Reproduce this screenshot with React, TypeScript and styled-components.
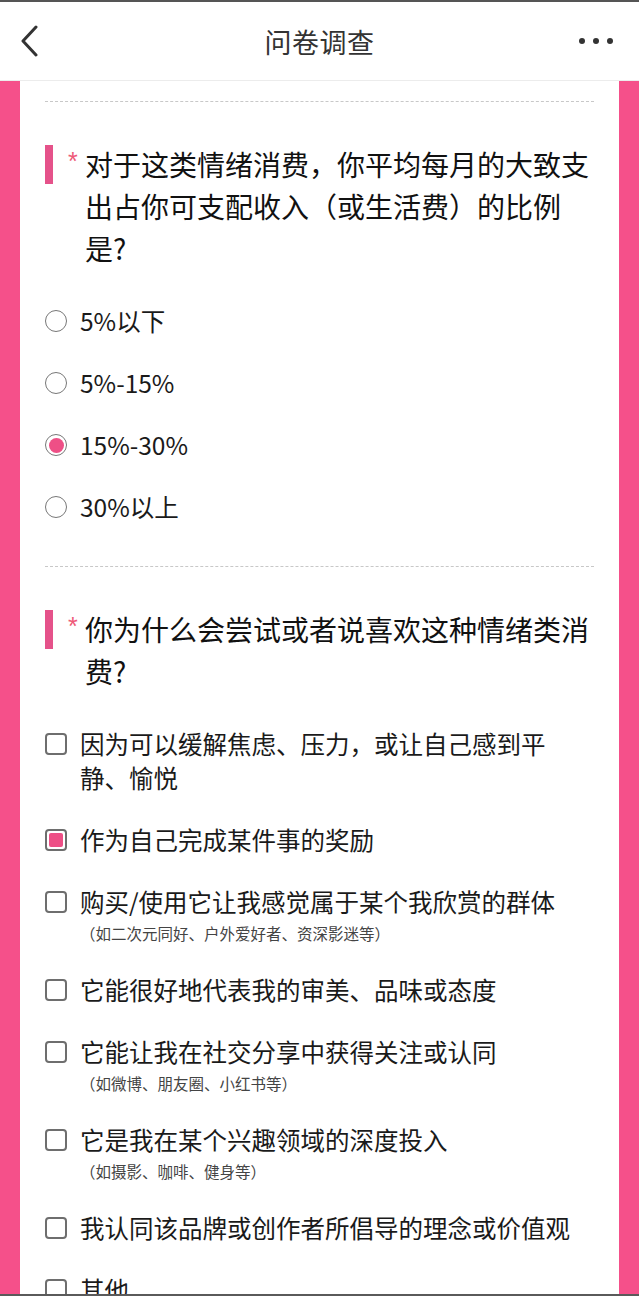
import React from "react"
import styled, { createGlobalStyle } from "styled-components"

const GlobalStyle = createGlobalStyle`
  html, body {
    margin: 0;
    padding: 0;
    background: #ffffff;
    overflow: hidden;
  }
  * {
    box-sizing: border-box;
  }
`

const FONT = `"Noto Sans CJK SC", "Noto Sans", sans-serif`
const PINK = "#f5508a"

const Screen = styled.div`
  width: 639px;
  height: 1296px;
  display: flex;
  flex-direction: column;
  overflow: hidden;
  border-top: 2px solid #555555;
  border-bottom: 2px solid #5a5a5a;
  font-family: ${FONT};
  background: #ffffff;
`

const Header = styled.header`
  flex: none;
  height: 79px;
  display: grid;
  grid-template-columns: 1fr auto 1fr;
  align-items: center;
  padding: 0 26px;
  border-bottom: 1px solid #ececec;
  background: #ffffff;
`

const HeaderButton = styled.div`
  width: 40px;
  height: 40px;
  margin-left: -17px;
  display: flex;
  align-items: center;
  justify-content: center;
`

const Title = styled.h1`
  margin: 0;
  font-size: 27px;
  font-weight: 400;
  color: #333333;
  letter-spacing: 0.5px;
`

const Dots = styled.div`
  justify-self: end;
  display: flex;
  gap: 8px;
  align-items: center;
  height: 40px;
`

const Dot = styled.span`
  width: 6px;
  height: 6px;
  border-radius: 50%;
  background: #333333;
`

const Frame = styled.main`
  flex: 1;
  display: flex;
  padding: 0 20px;
  background: ${PINK};
  min-height: 0;
`

const Sheet = styled.div`
  flex: 1;
  background: #ffffff;
  padding: 20px 25px 0;
`

const Divider = styled.hr`
  margin: 0;
  border: none;
  border-top: 1px dashed #c8c8c8;
`

const Question = styled.section`
  padding-top: 41px;
  padding-bottom: 28px;
`

const QuestionTitle = styled.div`
  display: flex;
  align-items: flex-start;
  margin-bottom: 21px;
`

const Marker = styled.span`
  flex: none;
  width: 8px;
  height: 39px;
  margin-top: 2px;
  margin-right: 15px;
  background: #e5528a;
`

const Required = styled.span`
  flex: none;
  width: 17px;
  font-family: "Liberation Sans", sans-serif;
  font-size: 25px;
  line-height: 36px;
  color: #ee5a78;
`

const TitleText = styled.p`
  margin: 0;
  flex: 1;
  font-size: 28px;
  line-height: 42px;
  color: #111111;
`

const OptionList = styled.ul`
  list-style: none;
  margin: 0;
  padding: 0;
`

const Option = styled.li`
  display: flex;
  align-items: flex-start;
  padding: 14px 0;
`

const Radio = styled.span<{ $checked?: boolean }>`
  flex: none;
  width: 22px;
  height: 22px;
  margin-top: 6px;
  margin-right: 13px;
  border-radius: 50%;
  border: 1.5px solid #777777;
  padding: 2.5px;
  background: #ffffff;
  &::after {
    content: "";
    display: block;
    width: 100%;
    height: 100%;
    border-radius: 50%;
    background: ${({ $checked }) => ($checked ? "#ee4f86" : "transparent")};
  }
`

const Checkbox = styled.span<{ $checked?: boolean }>`
  flex: none;
  width: 22px;
  height: 22px;
  margin-top: 6px;
  margin-right: 13px;
  border-radius: 4px;
  border: 2px solid #6e6e6e;
  padding: 2px;
  background: #ffffff;
  &::after {
    content: "";
    display: block;
    width: 100%;
    height: 100%;
    border-radius: 2px;
    background: ${({ $checked }) => ($checked ? "#ee4f86" : "transparent")};
  }
`

const OptionBody = styled.div`
  flex: 1;
  display: flex;
  flex-direction: column;
`

const OptionText = styled.span`
  font-size: 24.5px;
  line-height: 34px;
  color: #1a1a1a;
`

const OptionHint = styled.span`
  margin-top: 2px;
  font-size: 15.5px;
  line-height: 24px;
  color: #444444;
`

const BackIcon = () => (
  <svg width="22" height="32" viewBox="0 0 22 32" fill="none">
    <path d="M18 2 L5 16 L18 30" stroke="#333333" strokeWidth="3" strokeLinecap="round" strokeLinejoin="round" />
  </svg>
)

const radioOptions = [
  { label: "5%以下" },
  { label: "5%-15%" },
  { label: "15%-30%", checked: true },
  { label: "30%以上" },
]

const checkOptions: { label: React.ReactNode; hint?: string; checked?: boolean }[] = [
  { label: <>因为可以缓解焦虑、压力，或让自己感到平<br />静、愉悦</> },
  { label: "作为自己完成某件事的奖励", checked: true },
  { label: "购买/使用它让我感觉属于某个我欣赏的群体", hint: "（如二次元同好、户外爱好者、资深影迷等）" },
  { label: "它能很好地代表我的审美、品味或态度" },
  { label: "它能让我在社交分享中获得关注或认同", hint: "（如微博、朋友圈、小红书等）" },
  { label: "它是我在某个兴趣领域的深度投入", hint: "（如摄影、咖啡、健身等）" },
  { label: "我认同该品牌或创作者所倡导的理念或价值观" },
  { label: "其他" },
]

export default function App() {
  return (
    <>
      <GlobalStyle />
      <Screen>
        <Header>
          <HeaderButton>
            <BackIcon />
          </HeaderButton>
          <Title>问卷调查</Title>
          <Dots>
            <Dot />
            <Dot />
            <Dot />
          </Dots>
        </Header>

        <Frame>
          <Sheet>
            <Divider />

            <Question>
              <QuestionTitle>
                <Marker />
                <Required>*</Required>
                <TitleText>
                  对于这类情绪消费，你平均每月的大致支<br />出占你可支配收入（或生活费）的比例<br />是?
                </TitleText>
              </QuestionTitle>
              <OptionList>
                {radioOptions.map((o) => (
                  <Option key={o.label}>
                    <Radio $checked={o.checked} />
                    <OptionBody>
                      <OptionText>{o.label}</OptionText>
                    </OptionBody>
                  </Option>
                ))}
              </OptionList>
            </Question>

            <Divider />

            <Question>
              <QuestionTitle>
                <Marker />
                <Required>*</Required>
                <TitleText>
                  你为什么会尝试或者说喜欢这种情绪类消<br />费?
                </TitleText>
              </QuestionTitle>
              <OptionList>
                {checkOptions.map((o, i) => (
                  <Option key={i}>
                    <Checkbox $checked={o.checked} />
                    <OptionBody>
                      <OptionText>{o.label}</OptionText>
                      {o.hint && <OptionHint>{o.hint}</OptionHint>}
                    </OptionBody>
                  </Option>
                ))}
              </OptionList>
            </Question>
          </Sheet>
        </Frame>
      </Screen>
    </>
  )
}
